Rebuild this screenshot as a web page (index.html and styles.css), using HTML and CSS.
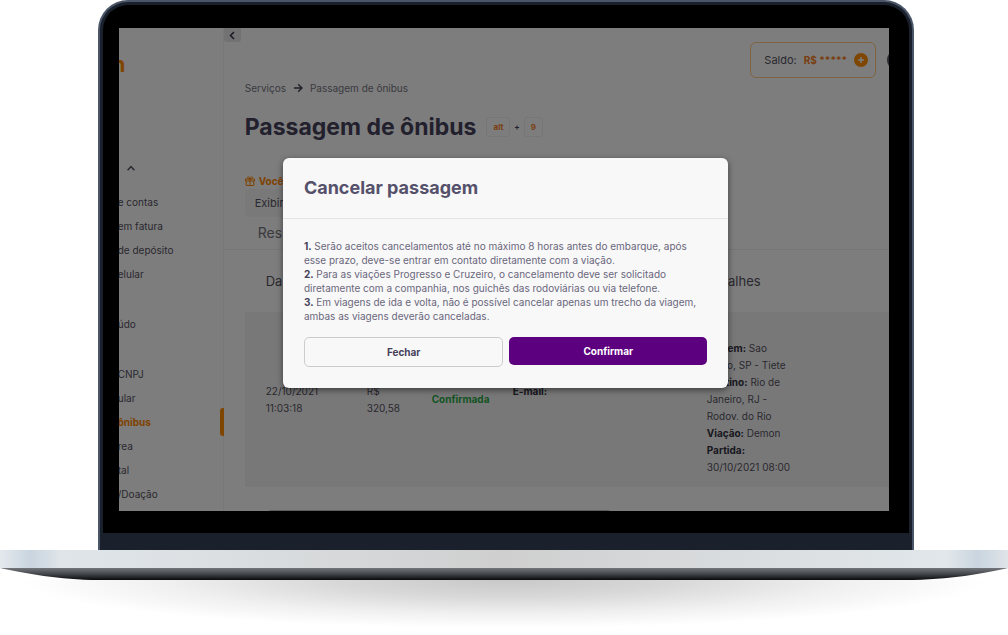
FILE: index.html
```
<!DOCTYPE html>
<html lang="pt-BR">
<head>
    <meta charset="UTF-8">
    <meta name="viewport" content="width=device-width, initial-scale=1.0">
    <title>Passagem de ônibus</title>
    <link rel="stylesheet" href="styles.css">
</head>
<body>
    <div class="laptop">
        <div class="lid">
            <div class="bezel">
                <div class="screen">
                    <aside class="sidebar">
                        <div class="logo">n</div>
                        <svg class="sidebar-chevron" viewBox="0 0 8 6"><path d="M.6 5.200L4 1.600l3.400 3.600"/></svg>
                        <nav>
                            <ul class="menu">
                                <li><a href="#">e contas</a></li>
                                <li><a href="#">em fatura</a></li>
                                <li><a href="#">de depósito</a></li>
                                <li><a href="#">elular</a></li>
                            </ul>
                            <ul class="menu">
                                <li><a href="#">údo</a></li>
                            </ul>
                            <ul class="menu">
                                <li><a href="#">CNPJ</a></li>
                                <li><a href="#">ular</a></li>
                                <li class="active"><a href="#">ônibus</a></li>
                                <li><a href="#">rea</a></li>
                                <li><a href="#">tal</a></li>
                                <li><a href="#">/Doação</a></li>
                            </ul>
                        </nav>
                    </aside>

                    <main class="content">
                        <header class="topbar">
                            <button class="collapse" aria-label="Recolher menu">
                                <svg viewBox="0 0 6 9"><path d="M5 1L1.5 4.5 5 8"/></svg>
                            </button>
                            <div class="balance">
                                <span>Saldo:</span>
                                <strong>R$ *****</strong>
                                <button class="balance-add" aria-label="Adicionar saldo">
                                    <svg viewBox="0 0 14 14"><circle cx="7" cy="7" r="7"/><path d="M7 4v6M4 7h6"/></svg>
                                </button>
                            </div>
                            <div class="avatar"></div>
                        </header>

                        <div class="breadcrumb">
                            <a href="#">Serviços</a>
                            <svg viewBox="0 0 10 10"><path d="M1 5h8M5.2 1.2L9 5 5.2 8.8"/></svg>
                            <span>Passagem de ônibus</span>
                        </div>

                        <div class="page-title">
                            <h1>Passagem de ônibus</h1>
                            <div class="shortcut"><kbd>alt</kbd><span>+</span><kbd>9</kbd></div>
                        </div>

                        <div class="promo">
                            <svg viewBox="0 0 10 10"><path d="M.5 3h9v2h-9zM1.2 5v4.5h7.6V5M5 3v6.5M5 3C3.800 3 2.500 2.500 2.500 1.500S4.600.2 5 3C5.400.2 7.500.5 7.500 1.500S6.200 3 5 3"/></svg>
                            <strong>Você</strong>
                        </div>
                        <button class="show-button">Exibir</button>
                        <h2 class="tab-title">Res</h2>

                        <table class="tickets">
                            <thead>
                                <tr>
                                    <th class="col-date">Da</th>
                                    <th class="col-value"></th>
                                    <th class="col-status"></th>
                                    <th class="col-client"></th>
                                    <th>Detalhes</th>
                                </tr>
                            </thead>
                            <tbody>
                                <tr>
                                    <td>22/10/2021<br>11:03:18</td>
                                    <td>R$<br>320,58</td>
                                    <td class="confirmed">Confirmada</td>
                                    <td><b>E-mail:</b><br>&nbsp;</td>
                                    <td>
                                        &nbsp;<br>
                                        <b>Origem:</b> Sao<br>
                                        Paulo, SP - Tiete<br>
                                        <b>Destino:</b> Rio de<br>
                                        Janeiro, RJ -<br>
                                        Rodov. do Rio<br>
                                        <b>Viação:</b> Demon<br>
                                        <b>Partida:</b><br>
                                        30/10/2021 08:00
                                    </td>
                                </tr>
                            </tbody>
                        </table>
                        <div class="next-card"></div>
                    </main>

                    <div class="overlay">
                        <div class="modal" role="dialog" aria-labelledby="modal-title">
                            <h2 class="modal-header" id="modal-title">Cancelar passagem</h2>
                            <div class="modal-body">
                                <p>
                                    <b>1.</b> Serão aceitos cancelamentos até no máximo 8 horas antes do embarque, após<br>
                                    esse prazo, deve-se entrar em contato diretamente com a viação.
                                </p>
                                <p>
                                    <b>2.</b> Para as viações Progresso e Cruzeiro, o cancelamento deve ser solicitado<br>
                                    diretamente com a companhia, nos guichês das rodoviárias ou via telefone.
                                </p>
                                <p>
                                    <b>3.</b> Em viagens de ida e volta, não é possível cancelar apenas um trecho da viagem,<br>
                                    ambas as viagens deverão canceladas.
                                </p>
                            </div>
                            <div class="modal-actions">
                                <button class="btn btn-outline">Fechar</button>
                                <button class="btn btn-primary">Confirmar</button>
                            </div>
                        </div>
                    </div>
                </div>
            </div>
        </div>
        <div class="base"></div>
        <svg class="underside" viewBox="0 0 1008 12" preserveAspectRatio="none">
            <defs>
                <linearGradient id="metal" x1="0" y1="0" x2="0" y2="1">
                    <stop offset="0" stop-color="#73777b"/>
                    <stop offset="0.5" stop-color="#43464a"/>
                    <stop offset="1" stop-color="#08090b"/>
                </linearGradient>
            </defs>
            <path fill="url(#metal)" d="M0 0H1008C985 5 950 12 905 12H98C60 12 24 5 0 0z"/>
        </svg>
        <div class="ground-shadow"></div>
    </div>
</body>
</html>
```
FILE: styles.css
```
* {
    box-sizing: border-box;
}
body {
    margin: 0;
    background: #fff;
    color: #55525f;
    font-family: Inter, "Liberation Sans", sans-serif;
    font-size: 10px;
}
h1, h2, p, ul {
    margin: 0;
    padding: 0;
}
button {
    font-family: inherit;
    border: 0;
    padding: 0;
    cursor: pointer;
}
a {
    color: inherit;
    text-decoration: none;
}
svg {
    display: block;
    fill: none;
    stroke: currentColor;
}

/* Laptop frame */
.laptop {
    overflow: hidden;
}
.lid {
    width: 81%;
    margin: 0 auto 0 calc(9% + 7px);
    padding: 3px 3px 17px;
    background: #1a202c;
    border: 2px solid #4a5568;
    border-bottom: 0;
    border-radius: 30px 30px 0 0;
}
.bezel {
    padding: 23px 20px 22px 16px;
    background: #000;
    border-radius: 25px 25px 0 0;
}
.screen {
    position: relative;
    display: grid;
    grid-template-columns: 105px 1fr;
    aspect-ratio: 770 / 483;
    overflow: hidden;
    background: #fafafa;
}
.base {
    height: 18px;
    background: linear-gradient(90deg, #e4e9ed 0%, #c9d5df 3%, #dfe5e9 6%, #dce0e3 20%, #cfcfcf 50%, #dce0e3 80%, #e1e7ea 94%, #c9d5df 97%, #dfe4e8 100%);
}
.underside {
    width: 100%;
    height: 12px;
    stroke: none;
}
.ground-shadow {
    height: 55px;
    background: radial-gradient(ellipse 48% 48px at 50% 0, #c8c8c8 0%, #d8d8d8 35%, #f0f0f0 70%, #fff 100%);
}

/* Sidebar */
.sidebar {
    min-width: 0;
    min-height: 0;
    border-right: 1px solid #f0f0f0;
}
.logo {
    height: 72px;
    padding-top: 24px;
    margin-left: -7px;
    color: #ff8c00;
    font-size: 22px;
    font-weight: 700;
    line-height: 24px;
}
.sidebar-chevron {
    width: 8px;
    height: 6px;
    margin: 65px 0 19px 8px;
    stroke-width: 1.5;
}
.menu {
    margin-bottom: 26px;
    padding-left: 0;
    list-style: none;
    line-height: 24px;
}
.menu li {
    position: relative;
}
.menu a {
    margin-left: -1px;
}
.menu .active {
    color: #ff8500;
    font-weight: 700;
}
.active::after {
    content: "";
    position: absolute;
    top: -2px;
    right: -1px;
    width: 4px;
    height: 28px;
    background: #ff8c00;
    border-radius: 3px 0 0 3px;
}

/* Page behind the dialog */
.content {
    min-width: 0;
    min-height: 0;
}
.topbar {
    display: flex;
    align-items: flex-start;
    height: 52px;
    overflow: hidden;
}
.collapse {
    display: flex;
    align-items: center;
    justify-content: center;
    width: 17px;
    height: 14px;
    background: #e4e4e4;
    color: #33303f;
    border-radius: 0 0 3px 3px;
}
.collapse svg {
    width: 6px;
    height: 9px;
    stroke-width: 1.5;
}
.balance {
    display: flex;
    align-items: center;
    gap: 7px;
    height: 36px;
    margin: 14px 11px 0 auto;
    padding: 0 7px 0 13px;
    border: 1px solid #ffc680;
    border-radius: 6px;
    font-size: 11px;
}
.balance strong {
    color: #f47b20;
    font-size: 10px;
}
.balance-add {
    background: none;
    color: #fafafa;
}
.balance-add svg {
    width: 14px;
    height: 14px;
    stroke-width: 1.5;
}
.balance-add circle {
    fill: #ff8c00;
    stroke: none;
}
.avatar {
    flex: none;
    width: 20px;
    height: 20px;
    margin: 22px -18px 0 0;
    background: #55525f;
    border-radius: 50%;
}
.breadcrumb {
    display: flex;
    align-items: center;
    gap: 7px;
    margin: 0 0 13px 21px;
    color: #77757f;
    line-height: 16px;
}
.breadcrumb svg {
    width: 10px;
    height: 10px;
    color: #45424f;
    stroke-width: 1.5;
}
.page-title {
    display: flex;
    align-items: center;
    gap: 10px;
    margin: 0 0 28px 21px;
    color: #45415a;
}
.page-title h1 {
    font-size: 23px;
    line-height: 36px;
}
.shortcut {
    display: flex;
    align-items: center;
    gap: 4px;
    font-size: 8px;
    font-weight: 700;
}
.shortcut kbd {
    min-width: 19px;
    padding: 0 6px;
    border: 1px solid #ececec;
    border-radius: 3px;
    color: #f47b20;
    font-family: inherit;
    line-height: 18px;
    text-align: center;
}
.promo {
    display: flex;
    align-items: center;
    gap: 4px;
    margin-left: 21px;
    color: #ff8500;
    line-height: 16px;
}
.promo svg {
    width: 10px;
    height: 10px;
}
.show-button {
    display: block;
    width: 120px;
    height: 28px;
    margin-left: 21px;
    padding-left: 10px;
    background: #f3f3f3;
    color: inherit;
    border-radius: 4px;
    font-size: 11px;
    text-align: left;
}
.tab-title {
    padding-left: 34px;
    border-bottom: 1px solid #ececec;
    color: #77757f;
    font-size: 14px;
    font-weight: 400;
    line-height: 32px;
}
.tickets {
    width: calc(100% - 21px);
    margin-left: 21px;
    border-collapse: collapse;
    table-layout: fixed;
    line-height: 17px;
}
.tickets th {
    height: 62px;
    padding: 0;
    font-size: 13px;
    font-weight: 400;
    text-align: left;
}
.tickets td {
    height: 175px;
    padding: 0;
    background: #f1f1f1;
    white-space: nowrap;
}
.tickets th:first-child,
.tickets td:first-child {
    padding-left: 21px;
}
.tickets b {
    color: #33303f;
}
.tickets .confirmed {
    color: #28a745;
    font-weight: 700;
}
.col-date {
    width: 122px;
}
.col-value {
    width: 65px;
}
.col-status {
    width: 81px;
}
.col-client {
    width: 194px;
}
.next-card {
    width: 345px;
    height: 40px;
    margin: 23px 0 0 43px;
    border: 1px solid #bbb;
    border-radius: 4px;
}

/* Dialog */
.overlay {
    position: absolute;
    inset: 0;
    display: flex;
    align-items: center;
    justify-content: center;
    padding: 7px 0 0 3px;
    background: rgba(0, 0, 0, 0.5);
}
.modal {
    width: 58%;
    background: #f8f8f8;
    border-radius: 6px;
    box-shadow: 0 2px 6px rgba(0, 0, 0, 0.5);
}
.modal-header {
    padding: 0 21px;
    border-bottom: 1px solid #e4e4e4;
    color: #55516b;
    font-size: 18px;
    line-height: 60px;
}
.modal-body {
    padding: 20px 21px 14px;
    color: #6a677c;
    line-height: 14px;
    white-space: nowrap;
}
.modal-body b {
    color: #45415a;
}
.modal-actions {
    display: flex;
    align-items: flex-start;
    gap: 6px;
    padding: 0 21px 21px;
}
.btn {
    flex: 1;
    height: 28px;
    border-radius: 5px;
    font-size: 10px;
    font-weight: 700;
}
.btn-outline {
    height: 30px;
    background: #f8f8f8;
    border: 1px solid #ccc;
    color: #45415a;
}
.btn-primary {
    background: #5c0080;
    color: #fff;
}
```
